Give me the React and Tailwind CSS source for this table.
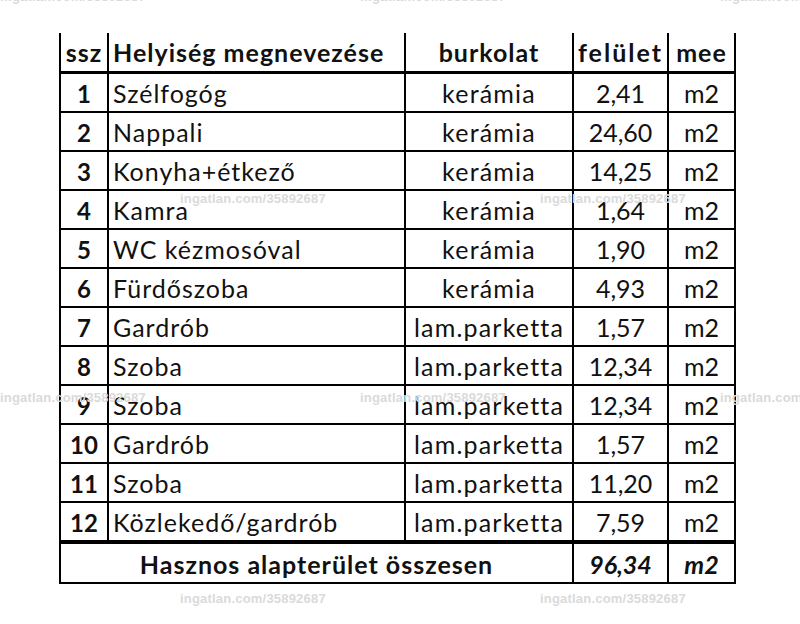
import React from 'react';

const rows = [
  ['1', 'Szélfogóg', 'kerámia', '2,41'],
  ['2', 'Nappali', 'kerámia', '24,60'],
  ['3', 'Konyha+étkező', 'kerámia', '14,25'],
  ['4', 'Kamra', 'kerámia', '1,64'],
  ['5', 'WC kézmosóval', 'kerámia', '1,90'],
  ['6', 'Fürdőszoba', 'kerámia', '4,93'],
  ['7', 'Gardrób', 'lam.parketta', '1,57'],
  ['8', 'Szoba', 'lam.parketta', '12,34'],
  ['9', 'Szoba', 'lam.parketta', '12,34'],
  ['10', 'Gardrób', 'lam.parketta', '1,57'],
  ['11', 'Szoba', 'lam.parketta', '11,20'],
  ['12', 'Közlekedő/gardrób', 'lam.parketta', '7,59'],
];

// watermark overlays: [top, left]
const marks = [
  [-13, 0], [-13, 360], [-13, 720],
  [189, 180], [189, 540],
  [388, 0], [388, 360], [388, 720],
  [589, 180], [589, 540],
];

export default function App() {
  return (
    <div className="relative w-[800px] h-[624px] bg-white overflow-hidden text-[#111]" style={{ fontFamily: 'Lato, "Open Sans", sans-serif' }}>
      <div className="pt-[33px] pl-[59px]">
        <div className="w-[677px] border-l-2 border-black text-[25px] leading-none">
          {/* header */}
          <div className="flex h-[41px] border-b-[3px] border-black font-bold tracking-[1px]">
            <div className="w-[48px] border-r-2 border-black flex items-center justify-center">ssz</div>
            <div className="w-[297px] border-r-2 border-black flex items-center pl-[4px]">Helyiség megnevezése</div>
            <div className="w-[168px] border-r-2 border-black flex items-center justify-center">burkolat</div>
            <div className="w-[95px] border-r-2 border-black flex items-center justify-center tracking-[2px]">felület</div>
            <div className="w-[67px] border-r-2 border-black flex items-center justify-center">mee</div>
          </div>

          {rows.map((r, i) => (
            <div key={r[0]} className={i === rows.length - 1 ? 'flex h-[41px] border-b-4 border-black' : 'flex h-[39px] border-b-2 border-black'}>
              <div className="w-[48px] border-r-2 border-black flex items-center justify-center font-bold text-[24px] pt-[2px]">{r[0]}</div>
              <div className="w-[297px] border-r-2 border-black flex items-center pl-[4px] pt-[2px] tracking-[1px]">{r[1]}</div>
              <div className="w-[168px] border-r-2 border-black flex items-center justify-center pt-[2px] tracking-[1.2px]">{r[2]}</div>
              <div className="w-[95px] border-r-2 border-black flex items-center justify-center pt-[2px]">{r[3]}</div>
              <div className="w-[67px] border-r-2 border-black flex items-center justify-center pt-[2px]">m2</div>
            </div>
          ))}

          {/* total */}
          <div className="flex h-[40px] border-b-2 border-black font-bold">
            <div className="w-[513px] border-r-2 border-black flex items-center justify-center pt-[2px] tracking-[1px]">Hasznos alapterület összesen</div>
            <div className="w-[95px] border-r-2 border-black flex items-center justify-center italic pt-[2px]">96,34</div>
            <div className="w-[67px] border-r-2 border-black flex items-center justify-center italic pt-[2px]">m2</div>
          </div>
        </div>
      </div>

      {marks.map(([t, l], i) => (
        <div
          key={i}
          className="absolute w-[137px] text-[13px] font-bold text-[#dadada] tracking-[0.2px] whitespace-nowrap"
          style={{ top: t, left: l, fontFamily: '"Liberation Sans", sans-serif' }}
        >
          ingatlan.com/35892687
        </div>
      ))}
    </div>
  );
}
